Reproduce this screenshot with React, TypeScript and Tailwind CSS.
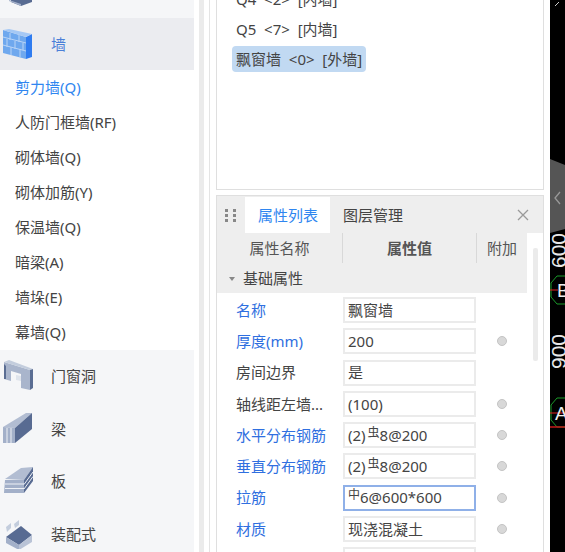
import React from "react";

const FONT = "font-['Noto_Sans','Noto_Sans_CJK_SC',sans-serif]";

function WallIcon() {
  return (
    <svg width="30" height="31" viewBox="0 0 30 31" className="shrink-0">
      <path d="M0 1 L23 8 L23 30 L0 24 Z" fill="#6fa8ee" />
      <path d="M23 8 L29 5 L29 28 L23 30 Z" fill="#2f7cf0" />
      <path d="M0 1 L6 0 L29 5 L23 8 Z" fill="#a5c8f5" />
      <path d="M0 8 L23 14 M0 16 L23 22 M7 4 V11 M16 6 V13 M4 10 V18 M12 12 V20 M20 14 V21 M8 18 V26 M17 20 V28" stroke="#b9d4f6" strokeWidth="1" fill="none" />
    </svg>
  );
}
function DoorIcon() {
  return (
    <svg width="30" height="32" viewBox="0 0 30 32" className="shrink-0">
      <path d="M1 2 L27 10 L27 30 L18 28 L18 14 L8 11 L8 21 L1 19 Z" fill="#a9b5cc" />
      <path d="M1 2 L6 0 L30 9 L27 10 Z" fill="#c3cddd" />
      <path d="M27 10 L30 9 L30 28 L27 30 Z" fill="#5a6d93" />
      <path d="M3 6 L3 19 L1 19 L1 4 Z" fill="#5a6d93" />
      <path d="M13 15 L18 16 L18 21 L13 20 Z" fill="#dfe4ec" />
    </svg>
  );
}
function BeamIcon() {
  return (
    <svg width="30" height="32" viewBox="0 0 30 32" className="shrink-0">
      <path d="M0 14 L23 0 L29 0 L12 15 Z" fill="#b2bdd2" />
      <path d="M12 15 L29 0 L29 16 L12 30 Z" fill="#586b92" />
      <path d="M0 14 L12 15 L12 30 L0 30 Z" fill="#a3b0c9" />
      <path d="M4 15 V30 M8 15 V30" stroke="#eef1f6" strokeWidth="1" />
    </svg>
  );
}
function SlabIcon() {
  return (
    <svg width="30" height="28" viewBox="0 0 30 28" className="shrink-0">
      <path d="M2 12 L18 1 L30 0 L21 13 Z" fill="#b2bdd2" />
      <path d="M21 13 L30 0 L30 14 L21 26 Z" fill="#586b92" />
      <path d="M2 13 L21 13 L21 26 L1 26 Z" fill="#a3b0c9" />
      <path d="M2 17 H21 M2 21.5 H21 M21 17.5 L30 5 M21 22 L30 9.5" stroke="#eef1f6" strokeWidth="1" />
    </svg>
  );
}
function PrefabIcon() {
  return (
    <svg width="30" height="30" viewBox="0 0 30 30" className="shrink-0">
      <path d="M3 8 L8 4 L8 9 L4 13 Z M11 5 L16 1 L16 6 L12 9 Z" fill="#c3cddd" />
      <path d="M3 18 L18 7 L29 16 L16 26 Z" fill="#586b92" />
      <path d="M3 18 L16 26 L16 31 L3 24 Z" fill="#a3b0c9" />
      <path d="M16 26 L29 16 L29 23 L16 31 Z" fill="#b9c3d6" />
    </svg>
  );
}

function TopIcon() {
  return (
    <svg width="30" height="6" viewBox="0 0 30 6" className="shrink-0">
      <path d="M8 0 H29 V2 L18 6 L8 2 Z" fill="#586b92" />
      <path d="M6 0 L18 4 L18 6 L6 1 Z" fill="#a3b0c9" />
    </svg>
  );
}

const subItems = ["人防门框墙(RF)", "砌体墙(Q)", "砌体加筋(Y)", "保温墙(Q)", "暗梁(A)", "墙垛(E)", "幕墙(Q)"];

function Category({ icon, label }: { icon: React.ReactNode; label: string }) {
  return (
    <div className="flex h-[52.5px] shrink-0 items-center bg-[#f5f6f8]">
      <div className="flex w-[51px] shrink-0 pl-[3px]">{icon}</div>
      <span className="text-[#444]">{label}</span>
    </div>
  );
}

function Rebar({ g, indent }: { g: string; indent?: boolean }) {
  return <span className={`align-[4px] text-[12px] leading-none ${indent ? "ml-[2px]" : ""}`}>{g}</span>;
}

type Row = { label: string; blue: boolean; value: React.ReactNode; dot: boolean; focus?: boolean };
const rows: Row[] = [
  { label: "名称", blue: true, value: "飘窗墙", dot: false },
  { label: "厚度(mm)", blue: true, value: "200", dot: true },
  { label: "房间边界", blue: false, value: "是", dot: false },
  { label: "轴线距左墙...", blue: false, value: "(100)", dot: true },
  { label: "水平分布钢筋", blue: true, value: <>(2)<Rebar g="虫" indent />8@200</>, dot: true },
  { label: "垂直分布钢筋", blue: true, value: <>(2)<Rebar g="虫" indent />8@200</>, dot: true },
  { label: "拉筋", blue: true, value: <><Rebar g="中" />6@600*600</>, dot: true, focus: true },
  { label: "材质", blue: true, value: "现浇混凝土", dot: true },
  { label: "", blue: false, value: "", dot: false },
];

function Canvas() {
  return (
    <svg width="15" height="552" viewBox="0 0 15 552" className="h-full w-full bg-black">
      <path d="M0 159 L15 165 L15 229 L0 233 Z" fill="#555" />
      <path d="M10 192 L5 198 L10 204" fill="none" stroke="#999" strokeWidth="1.3" />
      <path d="M5 6 L9 2" stroke="#ccc" strokeWidth="1" />
      <text x="0" y="0" transform="translate(16 268) rotate(-90)" fontSize="21" fill="#e8e8e8" fontFamily="Liberation Sans, sans-serif">600</text>
      <text x="0" y="0" transform="translate(16 369) rotate(-90)" fontSize="21" fill="#e8e8e8" fontFamily="Liberation Sans, sans-serif">900</text>
      <path d="M1 283 L7 276 H15 M1 297 L7 304 H15 M1 283 V297" fill="none" stroke="#1a9a2a" strokeWidth="1" />
      <path d="M0 290 H8" stroke="#e02020" strokeWidth="1" />
      <text x="7" y="297" fontSize="19" fill="#eee" fontFamily="Liberation Sans, sans-serif">B</text>
      <path d="M1 405 L7 398 H15 M1 420 L7 427 H15 M1 405 V420" fill="none" stroke="#1a9a2a" strokeWidth="1" />
      <path d="M0 413 H15" stroke="#e02020" strokeWidth="1" />
      <path d="M0 427 H15" stroke="#c01818" strokeWidth="1.5" />
      <text x="5" y="420" fontSize="19" fill="#eee" fontFamily="Liberation Sans, sans-serif">A</text>
    </svg>
  );
}

export default function App() {
  return (
    <div className={`${FONT} flex h-[552px] w-[565px] overflow-hidden bg-white text-[15px] text-[#444]`}>
      <div className="flex w-[194px] shrink-0 flex-col">
        <div className="flex h-[18px] shrink-0 items-start overflow-hidden bg-[#f5f6f8] pl-[3px]"><TopIcon /></div>
        <div className="flex h-[52px] shrink-0 items-center bg-[#ebecf0]">
          <div className="flex w-[51px] shrink-0 pl-[3px]"><WallIcon /></div>
          <span className="text-[#4a7fd8]">墙</span>
        </div>
        <div className="flex h-[35px] shrink-0 items-center pl-[15px] text-[#2f86f0]">剪力墙(Q)</div>
        {subItems.map((s) => (
          <div key={s} className="flex h-[35px] shrink-0 items-center pl-[15px]">{s}</div>
        ))}
        <Category icon={<DoorIcon />} label="门窗洞" />
        <Category icon={<BeamIcon />} label="梁" />
        <Category icon={<SlabIcon />} label="板" />
        <Category icon={<PrefabIcon />} label="装配式" />
      </div>
      <div className="ml-[5px] w-[5px] shrink-0 bg-[#ebebeb]" />
      <div className="ml-[5px] w-px shrink-0 bg-[#e4e4e4]" />
      <div className="ml-[6px] flex w-[328px] shrink-0 flex-col">
        <div className="h-[190px] overflow-hidden border border-t-0 border-[#dfdfdf] pl-[15px]">
          <div className="-mt-[16px] flex h-[31px] items-center pl-[4px]">Q4 &nbsp;&lt;2&gt; &nbsp;[内墙]</div>
          <div className="flex h-[30px] items-center pb-px pl-[4px]">Q5 &nbsp;&lt;7&gt; &nbsp;[内墙]</div>
          <div className="mt-px flex h-[26px] w-[134px] items-center whitespace-nowrap rounded-[4px] bg-[#c1d9f2] pl-[4px] pt-px">飘窗墙 &nbsp;&lt;0&gt; &nbsp;[外墙]</div>
        </div>
        <div className="mt-[5px] flex h-[357px] flex-col overflow-hidden border border-b-0 border-[#dfdfdf]">
          <div className="flex h-[37px] shrink-0 items-stretch bg-[#eeeeee] pt-px">
            <div className="grid w-[28px] shrink-0 grid-cols-2 content-center justify-items-center gap-y-[2px] pl-[6px] pr-[7px]">
              {[0, 1, 2, 3, 4, 5].map((i) => <span key={i} className="h-[3px] w-[3px] bg-[#888]" />)}
            </div>
            <div className="flex w-[85px] items-center justify-center bg-white pl-px text-[#2f86f0]">属性列表</div>
            <div className="flex w-[85px] items-center justify-center pl-px">图层管理</div>
            <div className="ml-auto flex w-[40px] items-center justify-center">
              <svg width="12" height="12" viewBox="0 0 12 12"><path d="M1 1 L11 11 M11 1 L1 11" stroke="#999" strokeWidth="1.3" /></svg>
            </div>
          </div>
          <div className="flex min-h-0 flex-1">
            <div className="w-[310px] shrink-0">
              <div className="flex h-[30px] bg-[#eeeeee] text-[#555]">
                <div className="flex w-[126px] items-center justify-center border-r border-[#d8d8d8]">属性名称</div>
                <div className="flex w-[134px] items-center justify-center border-r border-[#d8d8d8] font-bold">属性值</div>
                <div className="flex w-[50px] items-center justify-center">附加</div>
              </div>
              <div className="flex h-[30px] items-center bg-[#eeeeee] pt-px">
                <svg width="8" height="6" viewBox="0 0 8 6" className="ml-[11px] mr-[7px]"><path d="M1 1 H7 L4 5 Z" fill="#888" /></svg>
                <span>基础属性</span>
              </div>
              <div className="flex flex-col pt-[4px]">
                {rows.map((r, i) => (
                  <div key={i} className="flex h-[31.25px] shrink-0 items-start">
                    <div className={`flex h-[26px] w-[126px] shrink-0 items-center whitespace-nowrap pl-[19px] ${r.blue ? "text-[#2f6fe0]" : ""}`}>{r.label}</div>
                    <div className={`flex h-[26px] w-[133px] shrink-0 items-center whitespace-pre border-2 pl-[3px] ${r.focus ? "border-[#8fb0e8]" : "border-[#ebebeb]"}`}>
                      <span>{r.value}</span>
                    </div>
                    <div className="flex h-[26px] flex-1 items-center pl-[21px]">
                      {r.dot && <span className="h-[10px] w-[10px] rounded-full border border-[#c4c4c4] bg-[#d8d8d8]" />}
                    </div>
                  </div>
                ))}
              </div>
            </div>
            <div className="ml-[6px] mt-[15px] h-[113px] w-[5px] rounded-[2px] bg-[#ebebeb]" />
          </div>
        </div>
      </div>
      <div className="ml-[6px] w-[15px] shrink-0"><Canvas /></div>
    </div>
  );
}
